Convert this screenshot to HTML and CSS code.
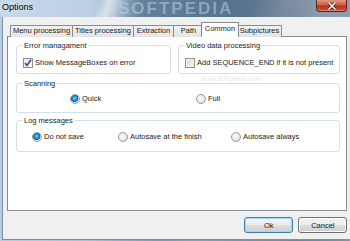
FILE: index.html
```html
<!DOCTYPE html>
<html lang="en">
<head>
    <meta charset="UTF-8">
    <title>Options</title>
    <link rel="stylesheet" href="styles.css">
</head>
<body>
    <div class="window">
        <!-- Title bar -->
        <div class="titlebar">
            <span class="title">Options</span>
            <span class="title-mark">SOFTPEDIA</span>
            <div class="close-btn">
                <svg class="close-icon" width="10" height="8" viewBox="0 0 10 8">
                    <path d="M1.5 0.5 L8.5 7.5 M8.5 0.5 L1.5 7.5" stroke="#4a1208" stroke-width="3"/>
                    <path d="M1.5 0.5 L8.5 7.5 M8.5 0.5 L1.5 7.5" stroke="#fff" stroke-width="1.6"/>
                </svg>
            </div>
        </div>

        <div class="frame">
            <div class="client">
                <div class="tabs">
                    <div class="tab tab-menu">Menu processing</div>
                    <div class="tab tab-titles">Titles processing</div>
                    <div class="tab tab-extraction">Extraction</div>
                    <div class="tab tab-path">Path</div>
                    <div class="tab active">Common</div>
                    <div class="tab tab-subpictures">Subpictures</div>
                </div>

                <div class="panel">
                    <div class="group-row">
                        <fieldset class="group error-group">
                            <legend>Error managament</legend>
                            <label class="option">
                                <span class="checkbox checked">
                                    <svg width="8" height="8" viewBox="0 0 8 8">
                                        <path d="M1 4 L3 6.5 L7 0.8" fill="none" stroke="#324c8c" stroke-width="1.6"/>
                                    </svg>
                                </span>
                                Show MessageBoxes on error
                            </label>
                        </fieldset>
                        <fieldset class="group video-group">
                            <legend>Video data processing</legend>
                            <label class="option">
                                <span class="checkbox"></span>
                                Add SEQUENCE_END if it is not present
                            </label>
                        </fieldset>
                    </div>

                    <fieldset class="group scan-group">
                        <legend>Scanning</legend>
                        <div class="options">
                            <label class="option quick"><span class="radio checked"></span>Quick</label>
                            <label class="option"><span class="radio"></span>Full</label>
                        </div>
                    </fieldset>

                    <fieldset class="group log-group">
                        <legend>Log messages</legend>
                        <div class="options">
                            <label class="option no-save"><span class="radio checked"></span>Do not save</label>
                            <label class="option at-finish"><span class="radio"></span>Autosave at the finish</label>
                            <label class="option"><span class="radio"></span>Autosave always</label>
                        </div>
                    </fieldset>

                    <span class="site-mark">www.softpedia.com</span>
                </div>

                <div class="buttons">
                    <button class="btn default">Ok</button>
                    <button class="btn">Cancel</button>
                </div>
            </div>
        </div>
    </div>
</body>
</html>
```

FILE: styles.css
```css
* {
    box-sizing: border-box;
}

body {
    margin: 0;
    background: #6f8397;
    font-family: 'Liberation Sans', Arial, sans-serif;
    font-size: 7.5px;
    color: #1a1a1a;
}

.window {
    width: 350px;
    height: 241px;
    display: flex;
    flex-direction: column;
    overflow: hidden;
    background: linear-gradient(to right, #b9cde2 0%, #a9c0d8 25%, #7f98b1 45%, #8aa0b6 55%, #6f869c 85%, #8194a6 100%);
}

/* Title bar */
.titlebar {
    position: relative;
    height: 17px;
    flex: none;
    display: flex;
    justify-content: space-between;
    align-items: flex-start;
    padding-left: 2px;
    padding-right: 3px;
    background:
        linear-gradient(112deg, transparent 28%, rgba(255,255,255,0.5) 31%, transparent 35%, transparent 72%, rgba(255,255,255,0.12) 80%, transparent 87%),
        linear-gradient(to right, #c6d7e9 0%, #bccfe3 26%, #a9bfd5 33%, #63809c 40%, #55728f 65%, #64798f 80%, #8a9bac 90%, #8f9fae 100%);
}

.title {
    font-size: 9px;
    line-height: 9px;
    margin-top: 3px;
    color: #000;
    text-shadow: 0 0 6px rgba(255,255,255,0.9);
}

.title-mark {
    position: absolute;
    left: 118px;
    top: 0;
    font-size: 17px;
    line-height: 17px;
    font-weight: bold;
    letter-spacing: 2px;
    color: rgba(196, 212, 228, 0.5);
}

.close-btn {
    position: relative;
    z-index: 3;
    flex: none;
    width: 31px;
    height: 12px;
    display: flex;
    align-items: center;
    justify-content: center;
    border: 1px solid #5e2318;
    border-top: 0;
    border-radius: 0 0 4px 4px;
    background-color: #c7452c;
    background-image: linear-gradient(to bottom, #e39582 0%, #d4674f 40%, #b9361f 55%, #c9503a 100%);
    box-shadow: inset 0 -1px 0 rgba(255,180,160,0.5);
}

.close-icon {
    display: block;
}

/* Frame and client area */
.frame {
    flex: 1;
    display: flex;
    padding: 0 4px 2px 2px;
}

.client {
    flex: 1;
    display: flex;
    flex-direction: column;
    padding: 5px 4px 6px 4px;
    background: #f0f0f0;
    border: 1px solid #7d8fa3;
    border-top: 0;
}

.tabs {
    display: flex;
    align-items: flex-end;
    padding-left: 3px;
    height: 15px;
    margin-bottom: -1px;
    position: relative;
    z-index: 1;
}

.tab {
    height: 12px;
    line-height: 10px;
    text-align: center;
    border: 1px solid #898c95;
    border-bottom: none;
    margin-right: -1px;
    background: linear-gradient(#f2f2f2, #e4e4e4);
    color: #1a1a1a;
    white-space: nowrap;
}

.tab-menu {
    width: 63px;
}

.tab-titles {
    width: 62px;
}

.tab-extraction {
    width: 41px;
}

.tab-path {
    width: 31px;
}

.tab-subpictures {
    width: 45px;
}

.tab.active {
    width: 38px;
    height: 15px;
    line-height: 12px;
    margin: 0 -2px 0 -2px;
    background: #fff;
    position: relative;
    z-index: 2;
}

.panel {
    position: relative;
    height: 175px;
    padding: 4px 6px 0 8px;
    background: #fff;
    border: 1px solid #898c95;
}

/* Group boxes */
.group {
    margin: 0;
    padding: 6px 6px 8px 6px;
    border: 1px solid #d5dfe5;
    border-radius: 3px;
    box-shadow: inset 1px 1px 0 #fff;
}

.group legend {
    padding: 0 1px;
    line-height: 9px;
}

.group-row {
    display: flex;
    gap: 7px;
    margin-bottom: 5px;
}

.error-group {
    width: 155px;
    padding-top: 8px;
    padding-bottom: 5px;
}

.video-group {
    flex: 1;
    padding-top: 8px;
    padding-bottom: 5px;
}

.scan-group {
    margin-bottom: 3px;
}

.log-group {
    padding-top: 7px;
    padding-bottom: 9px;
}

.options {
    display: flex;
    align-items: center;
}

.option {
    display: flex;
    align-items: center;
    height: 10px;
    line-height: 10px;
    white-space: nowrap;
}

.checkbox {
    width: 10px;
    height: 10px;
    margin-right: 2px;
    display: flex;
    align-items: center;
    justify-content: center;
    border: 1px solid #8e8f8f;
    background: linear-gradient(135deg, #d8d8d8, #f4f4f4);
    box-shadow: inset 0 0 0 1px #f4f4f4;
}

.checkbox.checked {
    background: linear-gradient(135deg, #dfe6f3, #fbfcfe);
}

.radio {
    width: 10px;
    height: 10px;
    margin-right: 2px;
    border-radius: 50%;
    border: 1px solid #9a9a9a;
    background: radial-gradient(circle at 40% 40%, #fdfdfd, #d4d4d4);
}

.radio.checked {
    background: radial-gradient(circle at 45% 40%, #7fd0ff 0%, #1c8ad4 35%, #1a5f9c 55%, #e8eef3 62%, #d4d9de 100%);
}

/* Fixed columns for the radio choices */
.quick {
    margin-left: 47px;
    width: 126px;
}

.no-save {
    margin-left: 9px;
    width: 86px;
}

.at-finish {
    width: 113px;
}

.site-mark {
    position: absolute;
    left: 193px;
    top: 38px;
    font-size: 7px;
    color: rgba(150, 160, 170, 0.3);
}

/* Bottom buttons */
.buttons {
    display: flex;
    justify-content: flex-end;
    gap: 5px;
    margin-top: 6px;
}

.btn {
    width: 49px;
    height: 16px;
    padding: 0;
    font-family: inherit;
    font-size: 7.5px;
    color: #1a1a1a;
    border: 1px solid #707070;
    border-radius: 3px;
    background: linear-gradient(#f2f2f2 0%, #ebebeb 50%, #dddddd 51%, #cfcfcf 100%);
    box-shadow: inset 0 0 0 1px #fbfbfb;
}

.btn.default {
    border-color: #3c7fb1;
    box-shadow: inset 0 0 0 1px #a6d8f3;
}
```
